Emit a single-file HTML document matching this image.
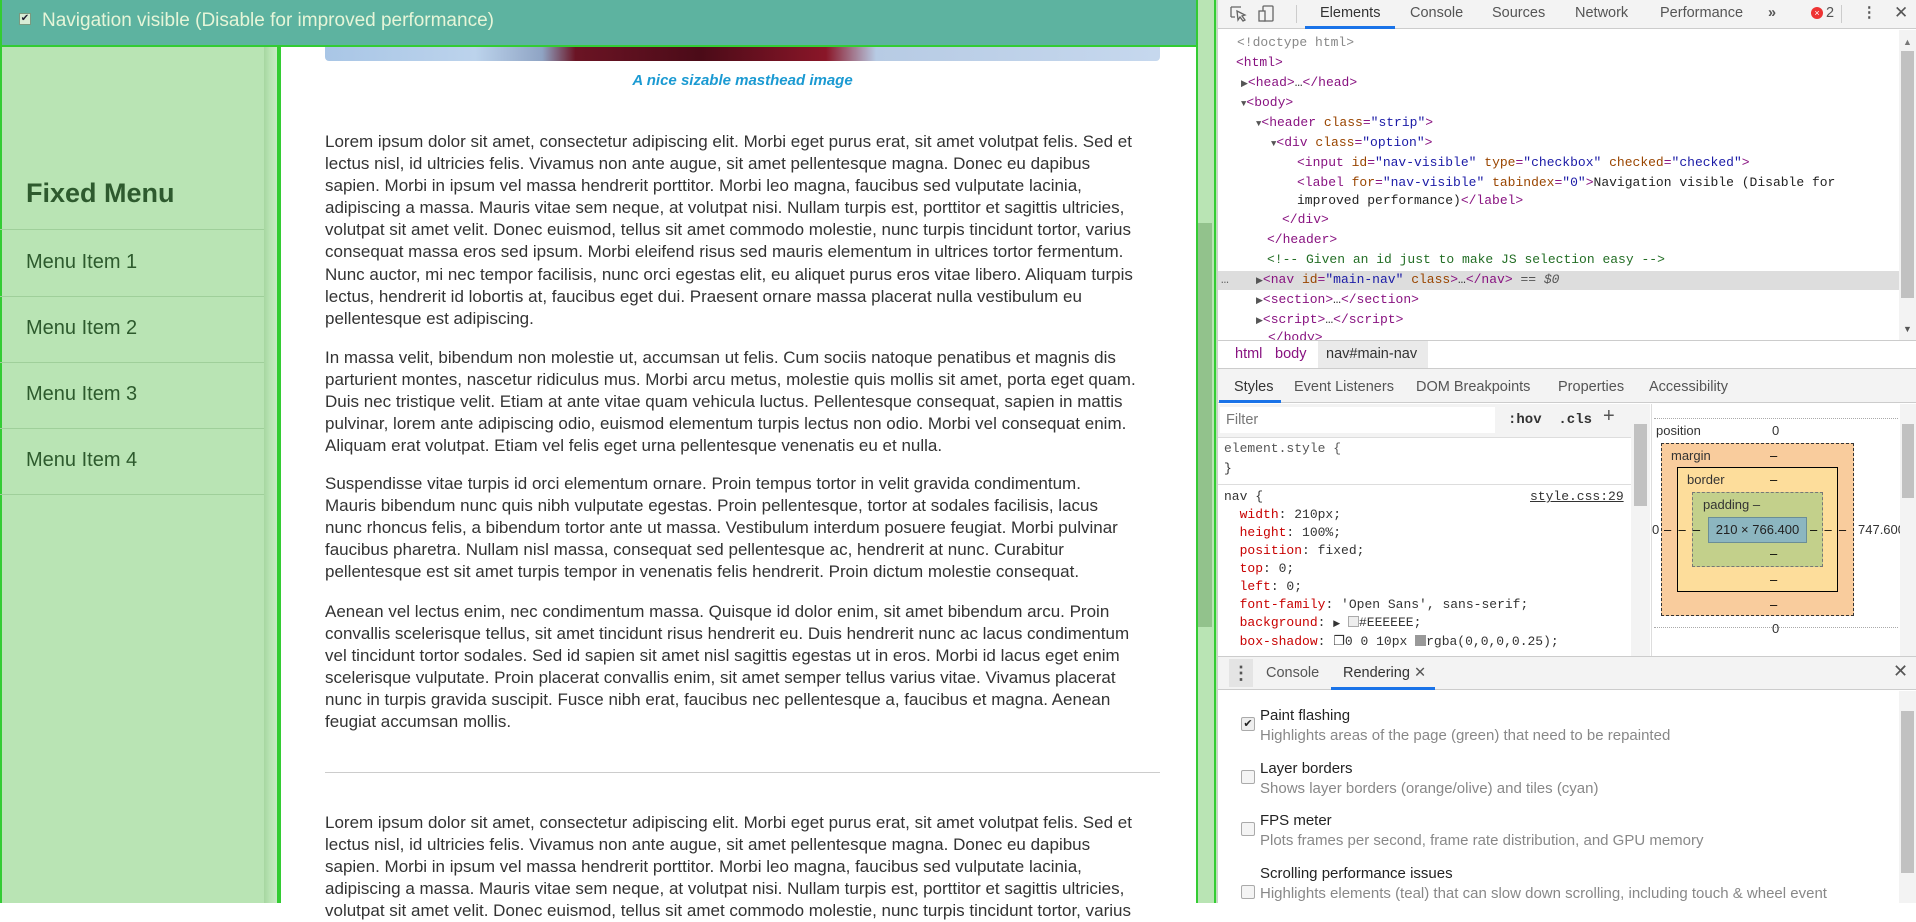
<!DOCTYPE html>
<html><head><meta charset="utf-8"><style>
*{margin:0;padding:0;box-sizing:border-box}
body{width:1916px;height:903px;overflow:hidden;position:relative;background:#fff;font-family:"Liberation Sans",Arial,sans-serif}
.a{position:absolute}
.p{position:absolute;left:325px;font-size:17px;line-height:22.1px;color:#333;white-space:nowrap}
.mi{position:absolute;left:26px;font-size:20px;color:#2d5a2d}
.dv{position:absolute;left:0;width:264px;height:1px;background:#9fcf9a}
.m{font-family:"Liberation Mono",monospace;font-size:13px;white-space:nowrap;position:absolute;line-height:20px}
.t{color:#881280}.at{color:#994500}.v{color:#1a1aa6}.g{color:#888}
.tab{position:absolute;font-size:14.5px;color:#333;top:5px}
.tri{font-size:9px;color:#555}
.sp{color:#c80000}
.rt{position:absolute;left:1260px;font-size:15px;color:#222}
.rd{position:absolute;left:1260px;font-size:15px;color:#888}
.cb{position:absolute;left:1241px;width:14px;height:14px;border:1px solid #aaa;border-radius:2px;background:#f4f4f4}
</style></head><body>
<div class="a" style="left:279px;top:46px;width:919px;height:857px;background:#fff;border-left:2px solid #33cc33;border-right:2px solid #33cc33"></div>
<div class="a" style="left:325px;top:46px;width:835px;height:15px;border-radius:0 0 4px 4px;background:linear-gradient(90deg,#a9c6e6 0%,#bcd3ec 18%,#8fa4c4 26%,#6b1424 30%,#4b0b18 45%,#8a1628 60%,#b7cbe4 66%,#c6d8ee 100%)"></div>
<div class="a" style="left:325px;top:72px;width:835px;text-align:center;font-size:15px;font-weight:bold;font-style:italic;color:#1b9ad2">A nice sizable masthead image</div>
<div class="p" style="top:131px">Lorem ipsum dolor sit amet, consectetur adipiscing elit. Morbi eget purus erat, sit amet volutpat felis. Sed et<br>lectus nisl, id ultricies felis. Vivamus non ante augue, sit amet pellentesque magna. Donec eu dapibus<br>sapien. Morbi in ipsum vel massa hendrerit porttitor. Morbi leo magna, faucibus sed vulputate lacinia,<br>adipiscing a massa. Mauris vitae sem neque, at volutpat nisi. Nullam turpis est, porttitor et sagittis ultricies,<br>volutpat sit amet velit. Donec euismod, tellus sit amet commodo molestie, nunc turpis tincidunt tortor, varius<br>consequat massa eros sed ipsum. Morbi eleifend risus sed mauris elementum in ultrices tortor fermentum.<br>Nunc auctor, mi nec tempor facilisis, nunc orci egestas elit, eu aliquet purus eros vitae libero. Aliquam turpis<br>lectus, hendrerit id lobortis at, faucibus eget dui. Praesent ornare massa placerat nulla vestibulum eu<br>pellentesque est adipiscing.</div>
<div class="p" style="top:347px">In massa velit, bibendum non molestie ut, accumsan ut felis. Cum sociis natoque penatibus et magnis dis<br>parturient montes, nascetur ridiculus mus. Morbi arcu metus, molestie quis mollis sit amet, porta eget quam.<br>Duis nec tristique velit. Etiam at ante vitae quam vehicula luctus. Pellentesque consequat, sapien in mattis<br>pulvinar, lorem ante adipiscing odio, euismod elementum turpis lectus non odio. Morbi vel consequat enim.<br>Aliquam erat volutpat. Etiam vel felis eget urna pellentesque venenatis eu et nulla.</div>
<div class="p" style="top:473px">Suspendisse vitae turpis id orci elementum ornare. Proin tempus tortor in velit gravida condimentum.<br>Mauris bibendum nunc quis nibh vulputate egestas. Proin pellentesque, tortor at sodales facilisis, lacus<br>nunc rhoncus felis, a bibendum tortor ante ut massa. Vestibulum interdum posuere feugiat. Morbi pulvinar<br>faucibus pharetra. Nullam nisl massa, consequat sed pellentesque ac, hendrerit at nunc. Curabitur<br>pellentesque est sit amet turpis tempor in venenatis felis hendrerit. Proin dictum molestie consequat.</div>
<div class="p" style="top:601px">Aenean vel lectus enim, nec condimentum massa. Quisque id dolor enim, sit amet bibendum arcu. Proin<br>convallis scelerisque tellus, sit amet tincidunt risus hendrerit eu. Duis hendrerit nunc ac lacus condimentum<br>vel tincidunt tortor sodales. Sed id sapien sit amet nisl sagittis egestas ut in eros. Morbi id lacus eget enim<br>scelerisque vulputate. Proin placerat convallis enim, sit amet semper tellus varius vitae. Vivamus placerat<br>nunc in turpis gravida suscipit. Fusce nibh erat, faucibus nec pellentesque a, faucibus et magna. Aenean<br>feugiat accumsan mollis.</div>
<div class="a" style="left:325px;top:772px;width:835px;height:1px;background:#ccc"></div>
<div class="p" style="top:812px">Lorem ipsum dolor sit amet, consectetur adipiscing elit. Morbi eget purus erat, sit amet volutpat felis. Sed et<br>lectus nisl, id ultricies felis. Vivamus non ante augue, sit amet pellentesque magna. Donec eu dapibus<br>sapien. Morbi in ipsum vel massa hendrerit porttitor. Morbi leo magna, faucibus sed vulputate lacinia,<br>adipiscing a massa. Mauris vitae sem neque, at volutpat nisi. Nullam turpis est, porttitor et sagittis ultricies,<br>volutpat sit amet velit. Donec euismod, tellus sit amet commodo molestie, nunc turpis tincidunt tortor, varius</div>

<div class="a" style="left:0;top:46px;width:279px;height:857px;background:#b9e4b4;border-left:2px solid #33cc33"></div>
<div class="a" style="left:264px;top:46px;width:15px;height:857px;background:linear-gradient(90deg,#a6d6a0,#b9e4b4 40%,#cdeccb)"></div>
<div class="a" style="left:277px;top:46px;width:2px;height:857px;background:#33cc33"></div>
<div class="a" style="left:26px;top:178px;font-size:27px;font-weight:bold;color:#2e5a2e">Fixed Menu</div>
<div class="dv" style="top:229px"></div><div class="dv" style="top:296px"></div><div class="dv" style="top:362px"></div><div class="dv" style="top:428px"></div><div class="dv" style="top:494px"></div>
<div class="mi" style="top:251px">Menu Item 1</div>
<div class="mi" style="top:317px">Menu Item 2</div>
<div class="mi" style="top:383px">Menu Item 3</div>
<div class="mi" style="top:449px">Menu Item 4</div>

<div class="a" style="left:0;top:0;width:1198px;height:47px;background:#5db3a0;border:2px solid #33cc33;border-top:none"></div>
<div class="a" style="left:19px;top:13px;width:12px;height:12px;background:#d9ecd5;border:1px solid #7a9a80;font-size:10px;line-height:10px;text-align:center;color:#223">✔</div>
<div class="a" style="left:42px;top:10px;font-size:19px;color:#e6f5d8">Navigation visible (Disable for improved performance)</div>

<div class="a" style="left:1198px;top:0;width:19px;height:903px;background:#b9e4b4"></div>
<div class="a" style="left:1198px;top:223px;width:14px;height:404px;background:#92c28c"></div>
<div class="a" style="left:1214px;top:0;width:2px;height:903px;background:#33cc33"></div>

<div class="a" style="left:1217px;top:0;width:699px;height:903px;background:#fff"></div>
<div class="a" style="left:1217px;top:0;width:699px;height:29px;background:#f3f3f3;border-bottom:1px solid #ccc"></div>
<svg class="a" style="left:1229px;top:4px" width="50" height="20"><path d="M2 3h10M2 3v10M2 13h4M8 7l8 4-3 1 3 4-2 1-3-4-2 3z" stroke="#666" fill="none" stroke-width="1.3"/><rect x="34" y="2" width="10" height="15" rx="1" stroke="#666" fill="none" stroke-width="1.3"/><rect x="30" y="7" width="6" height="10" fill="#f3f3f3" stroke="#666" stroke-width="1.3"/></svg>
<div class="a" style="left:1296px;top:5px;width:1px;height:18px;background:#ccc"></div>
<div class="tab" style="left:1320px">Elements</div>
<div class="a" style="left:1305px;top:26px;width:90px;height:3px;background:#1a73e8"></div>
<div class="tab" style="left:1410px;color:#555">Console</div>
<div class="tab" style="left:1492px;color:#555">Sources</div>
<div class="tab" style="left:1575px;color:#555">Network</div>
<div class="tab" style="left:1660px;color:#555">Performance</div>
<div class="tab" style="left:1768px;color:#555;font-weight:bold">»</div>
<div class="a" style="left:1811px;top:7px;width:12px;height:12px;border-radius:50%;background:#e33;color:#fff;font-size:9px;line-height:12px;text-align:center">×</div>
<div class="tab" style="left:1826px;color:#555">2</div>
<div class="a" style="left:1841px;top:5px;width:1px;height:18px;background:#ccc"></div>
<div class="tab" style="left:1862px;color:#555;font-weight:bold">⋮</div>
<div class="tab" style="left:1894px;color:#555;font-size:17px;top:3px">✕</div>

<div class="a" style="left:1217px;top:271px;width:682px;height:19px;background:#ddd"></div>
<div class="m g" style="left:1237px;top:33px">&lt;!doctype html&gt;</div>
<div class="m t" style="left:1236px;top:53px">&lt;html&gt;</div>
<div class="m t" style="left:1241px;top:73px"><span class="tri">▶</span>&lt;head&gt;<span style="color:#333">…</span>&lt;/head&gt;</div>
<div class="m t" style="left:1241px;top:93px"><span class="tri">▼</span>&lt;body&gt;</div>
<div class="m t" style="left:1256px;top:113px"><span class="tri">▼</span>&lt;header <span class="at">class</span>=<span class="v">"strip"</span>&gt;</div>
<div class="m t" style="left:1271px;top:133px"><span class="tri">▼</span>&lt;div <span class="at">class</span>=<span class="v">"option"</span>&gt;</div>
<div class="m t" style="left:1297px;top:153px">&lt;input <span class="at">id</span>=<span class="v">"nav-visible"</span> <span class="at">type</span>=<span class="v">"checkbox"</span> <span class="at">checked</span>=<span class="v">"checked"</span>&gt;</div>
<div class="m t" style="left:1297px;top:173px">&lt;label <span class="at">for</span>=<span class="v">"nav-visible"</span> <span class="at">tabindex</span>=<span class="v">"0"</span>&gt;<span style="color:#222">Navigation visible (Disable for</span></div>
<div class="m" style="left:1297px;top:191px;color:#222">improved performance)<span class="t">&lt;/label&gt;</span></div>
<div class="m t" style="left:1282px;top:210px">&lt;/div&gt;</div>
<div class="m t" style="left:1267px;top:230px">&lt;/header&gt;</div>
<div class="m" style="left:1267px;top:250px;color:#236e25">&lt;!-- Given an id just to make JS selection easy --&gt;</div>
<div class="m" style="left:1221px;top:270px;color:#666">…</div>
<div class="m t" style="left:1256px;top:270px"><span class="tri">▶</span>&lt;nav <span class="at">id</span>=<span class="v">"main-nav"</span> <span class="at">class</span>&gt;<span style="color:#333">…</span>&lt;/nav&gt; <span style="color:#555">== <i>$0</i></span></div>
<div class="m t" style="left:1256px;top:290px"><span class="tri">▶</span>&lt;section&gt;<span style="color:#333">…</span>&lt;/section&gt;</div>
<div class="m t" style="left:1256px;top:310px"><span class="tri">▶</span>&lt;script&gt;<span style="color:#333">…</span>&lt;/script&gt;</div>
<div class="a" style="left:1217px;top:330px;width:682px;height:10px;overflow:hidden"><div class="m t" style="left:51px;top:-2px">&lt;/body&gt;</div></div>
<div class="a" style="left:1899px;top:30px;width:17px;height:310px;background:#f3f3f3"></div>
<div class="a" style="left:1901px;top:51px;width:13px;height:247px;background:#c1c1c1"></div>
<div class="a" style="left:1903px;top:37px;font-size:9px;color:#777">▲</div>
<div class="a" style="left:1903px;top:324px;font-size:9px;color:#555">▼</div>

<div class="a" style="left:1217px;top:340px;width:699px;height:29px;border-top:1px solid #ccc;border-bottom:1px solid #ccc;background:#fff"></div>
<div class="a" style="left:1235px;top:346px;font-size:14.5px;color:#881280">html</div>
<div class="a" style="left:1275px;top:346px;font-size:14.5px;color:#881280">body</div>
<div class="a" style="left:1318px;top:341px;width:110px;height:27px;background:#eaeaea"></div>
<div class="a" style="left:1326px;top:346px;font-size:14.5px;color:#333">nav#main-nav</div>
<div class="a" style="left:1217px;top:369px;width:699px;height:34px;background:#f3f3f3;border-bottom:1px solid #ccc"></div>
<div class="a" style="left:1234px;top:379px;font-size:14.5px;color:#333">Styles</div>
<div class="a" style="left:1219px;top:400px;width:62px;height:3px;background:#1a73e8"></div>
<div class="a" style="left:1294px;top:379px;font-size:14.5px;color:#555">Event Listeners</div>
<div class="a" style="left:1416px;top:379px;font-size:14.5px;color:#555">DOM Breakpoints</div>
<div class="a" style="left:1558px;top:379px;font-size:14.5px;color:#555">Properties</div>
<div class="a" style="left:1649px;top:379px;font-size:14.5px;color:#555">Accessibility</div>
<div class="a" style="left:1217px;top:404px;width:414px;height:34px;background:#f3f3f3;border-bottom:1px solid #ddd"></div>
<div class="a" style="left:1220px;top:407px;width:275px;height:26px;background:#fff"></div>
<div class="a" style="left:1226px;top:412px;font-size:14.5px;color:#777">Filter</div>
<div class="a" style="left:1508px;top:412px;font-size:14px;color:#333;font-weight:bold;font-family:'Liberation Mono',monospace">:hov &nbsp;.cls</div>
<div class="a" style="left:1603px;top:405px;font-size:20px;color:#555">+</div>
<div class="m" style="left:1224px;top:439px;color:#555">element.style {</div>
<div class="m" style="left:1224px;top:459px;color:#333">}</div>
<div class="a" style="left:1217px;top:484px;width:414px;height:1px;background:#ddd"></div>
<div class="m" style="left:1224px;top:488px;color:#333;line-height:18px">nav {<br>&nbsp;&nbsp;<span class="sp">width</span>: 210px;<br>&nbsp;&nbsp;<span class="sp">height</span>: 100%;<br>&nbsp;&nbsp;<span class="sp">position</span>: fixed;<br>&nbsp;&nbsp;<span class="sp">top</span>: 0;<br>&nbsp;&nbsp;<span class="sp">left</span>: 0;<br>&nbsp;&nbsp;<span class="sp">font-family</span>: 'Open Sans', sans-serif;<br>&nbsp;&nbsp;<span class="sp">background</span>: <span style="font-size:9px">▶</span> <span style="display:inline-block;width:11px;height:11px;border:1px solid #aaa;background:#eee;vertical-align:-1px"></span>#EEEEEE;<br>&nbsp;&nbsp;<span class="sp">box-shadow</span>: ❐0 0 10px <span style="display:inline-block;width:11px;height:11px;background:#999;vertical-align:-1px"></span>rgba(0,0,0,0.25);</div>
<div class="m" style="left:1530px;top:488px;color:#333;line-height:18px;text-decoration:underline">style.css:29</div>
<div class="a" style="left:1631px;top:404px;width:19px;height:252px;background:#f3f3f3"></div>
<div class="a" style="left:1634px;top:424px;width:13px;height:82px;background:#c1c1c1"></div>
<div class="a" style="left:1651px;top:404px;width:1px;height:252px;background:#ddd"></div>
<div class="a" style="left:1654px;top:418px;width:244px;border-top:1px dotted #aaa"></div>
<div class="a" style="left:1656px;top:423px;font-size:13px;color:#333">position</div>
<div class="a" style="left:1772px;top:423px;font-size:13px;color:#333">0</div>
<div class="a" style="left:1661px;top:443px;width:193px;height:173px;background:#f9cc9d;border:1px dashed #333"></div>
<div class="a" style="left:1671px;top:448px;font-size:13px;color:#333">margin</div>
<div class="a" style="left:1677px;top:467px;width:161px;height:125px;background:#fddd9b;border:1px solid #000"></div>
<div class="a" style="left:1687px;top:472px;font-size:13px;color:#333">border</div>
<div class="a" style="left:1692px;top:492px;width:131px;height:75px;background:#c3d08b;border:1px dashed #777"></div>
<div class="a" style="left:1703px;top:497px;font-size:13px;color:#333">padding –</div>
<div class="a" style="left:1708px;top:517px;width:99px;height:26px;background:#8cb6c0;border:1px solid #6b8e96;font-size:13px;color:#222;text-align:center;line-height:24px">210 × 766.400</div>
<div class="a" style="left:1770px;top:448px;font-size:13px">–</div><div class="a" style="left:1770px;top:472px;font-size:13px">–</div>
<div class="a" style="left:1770px;top:546px;font-size:13px">–</div><div class="a" style="left:1770px;top:572px;font-size:13px">–</div><div class="a" style="left:1770px;top:597px;font-size:13px">–</div>
<div class="a" style="left:1664px;top:522px;font-size:13px">– &nbsp;– &nbsp;–</div>
<div class="a" style="left:1810px;top:522px;font-size:13px">– &nbsp;– &nbsp;–</div>
<div class="a" style="left:1858px;top:522px;font-size:13px;color:#333">747.600</div>
<div class="a" style="left:1652px;top:522px;font-size:13px;color:#333">0</div>
<div class="a" style="left:1654px;top:627px;width:244px;border-top:1px dotted #aaa"></div>
<div class="a" style="left:1772px;top:621px;font-size:13px;color:#333">0</div>
<div class="a" style="left:1900px;top:404px;width:16px;height:252px;background:#f3f3f3"></div>
<div class="a" style="left:1902px;top:424px;width:12px;height:74px;background:#c1c1c1"></div>
<div class="a" style="left:1217px;top:656px;width:699px;height:34px;background:#f3f3f3;border-top:1px solid #ccc;border-bottom:1px solid #ccc"></div>
<div class="a" style="left:1229px;top:659px;width:24px;height:28px;background:#e4e4e4;font-size:18px;text-align:center;color:#555;font-weight:bold;line-height:28px">⋮</div>
<div class="a" style="left:1266px;top:665px;font-size:14.5px;color:#555">Console</div>
<div class="a" style="left:1343px;top:665px;font-size:14.5px;color:#333">Rendering <span style="color:#555">✕</span></div>
<div class="a" style="left:1331px;top:687px;width:104px;height:3px;background:#1a73e8"></div>
<div class="a" style="left:1893px;top:661px;font-size:18px;color:#555">✕</div>
<div class="cb" style="top:717px;background:#eee;font-size:11px;line-height:12px;text-align:center;color:#222">✔</div>
<div class="rt" style="top:707px">Paint flashing</div><div class="rd" style="top:727px">Highlights areas of the page (green) that need to be repainted</div>
<div class="cb" style="top:770px"></div>
<div class="rt" style="top:760px">Layer borders</div><div class="rd" style="top:780px">Shows layer borders (orange/olive) and tiles (cyan)</div>
<div class="cb" style="top:822px"></div>
<div class="rt" style="top:812px">FPS meter</div><div class="rd" style="top:832px">Plots frames per second, frame rate distribution, and GPU memory</div>
<div class="cb" style="top:885px"></div>
<div class="rt" style="top:865px">Scrolling performance issues</div><div class="rd" style="top:885px">Highlights elements (teal) that can slow down scrolling, including touch &amp; wheel event</div>
<div class="a" style="left:1899px;top:691px;width:17px;height:212px;background:#f3f3f3"></div>
<div class="a" style="left:1901px;top:711px;width:13px;height:162px;background:#c1c1c1"></div>
<div class="a" style="left:1217px;top:0;width:1px;height:903px;background:#ccc"></div>
</body></html>
